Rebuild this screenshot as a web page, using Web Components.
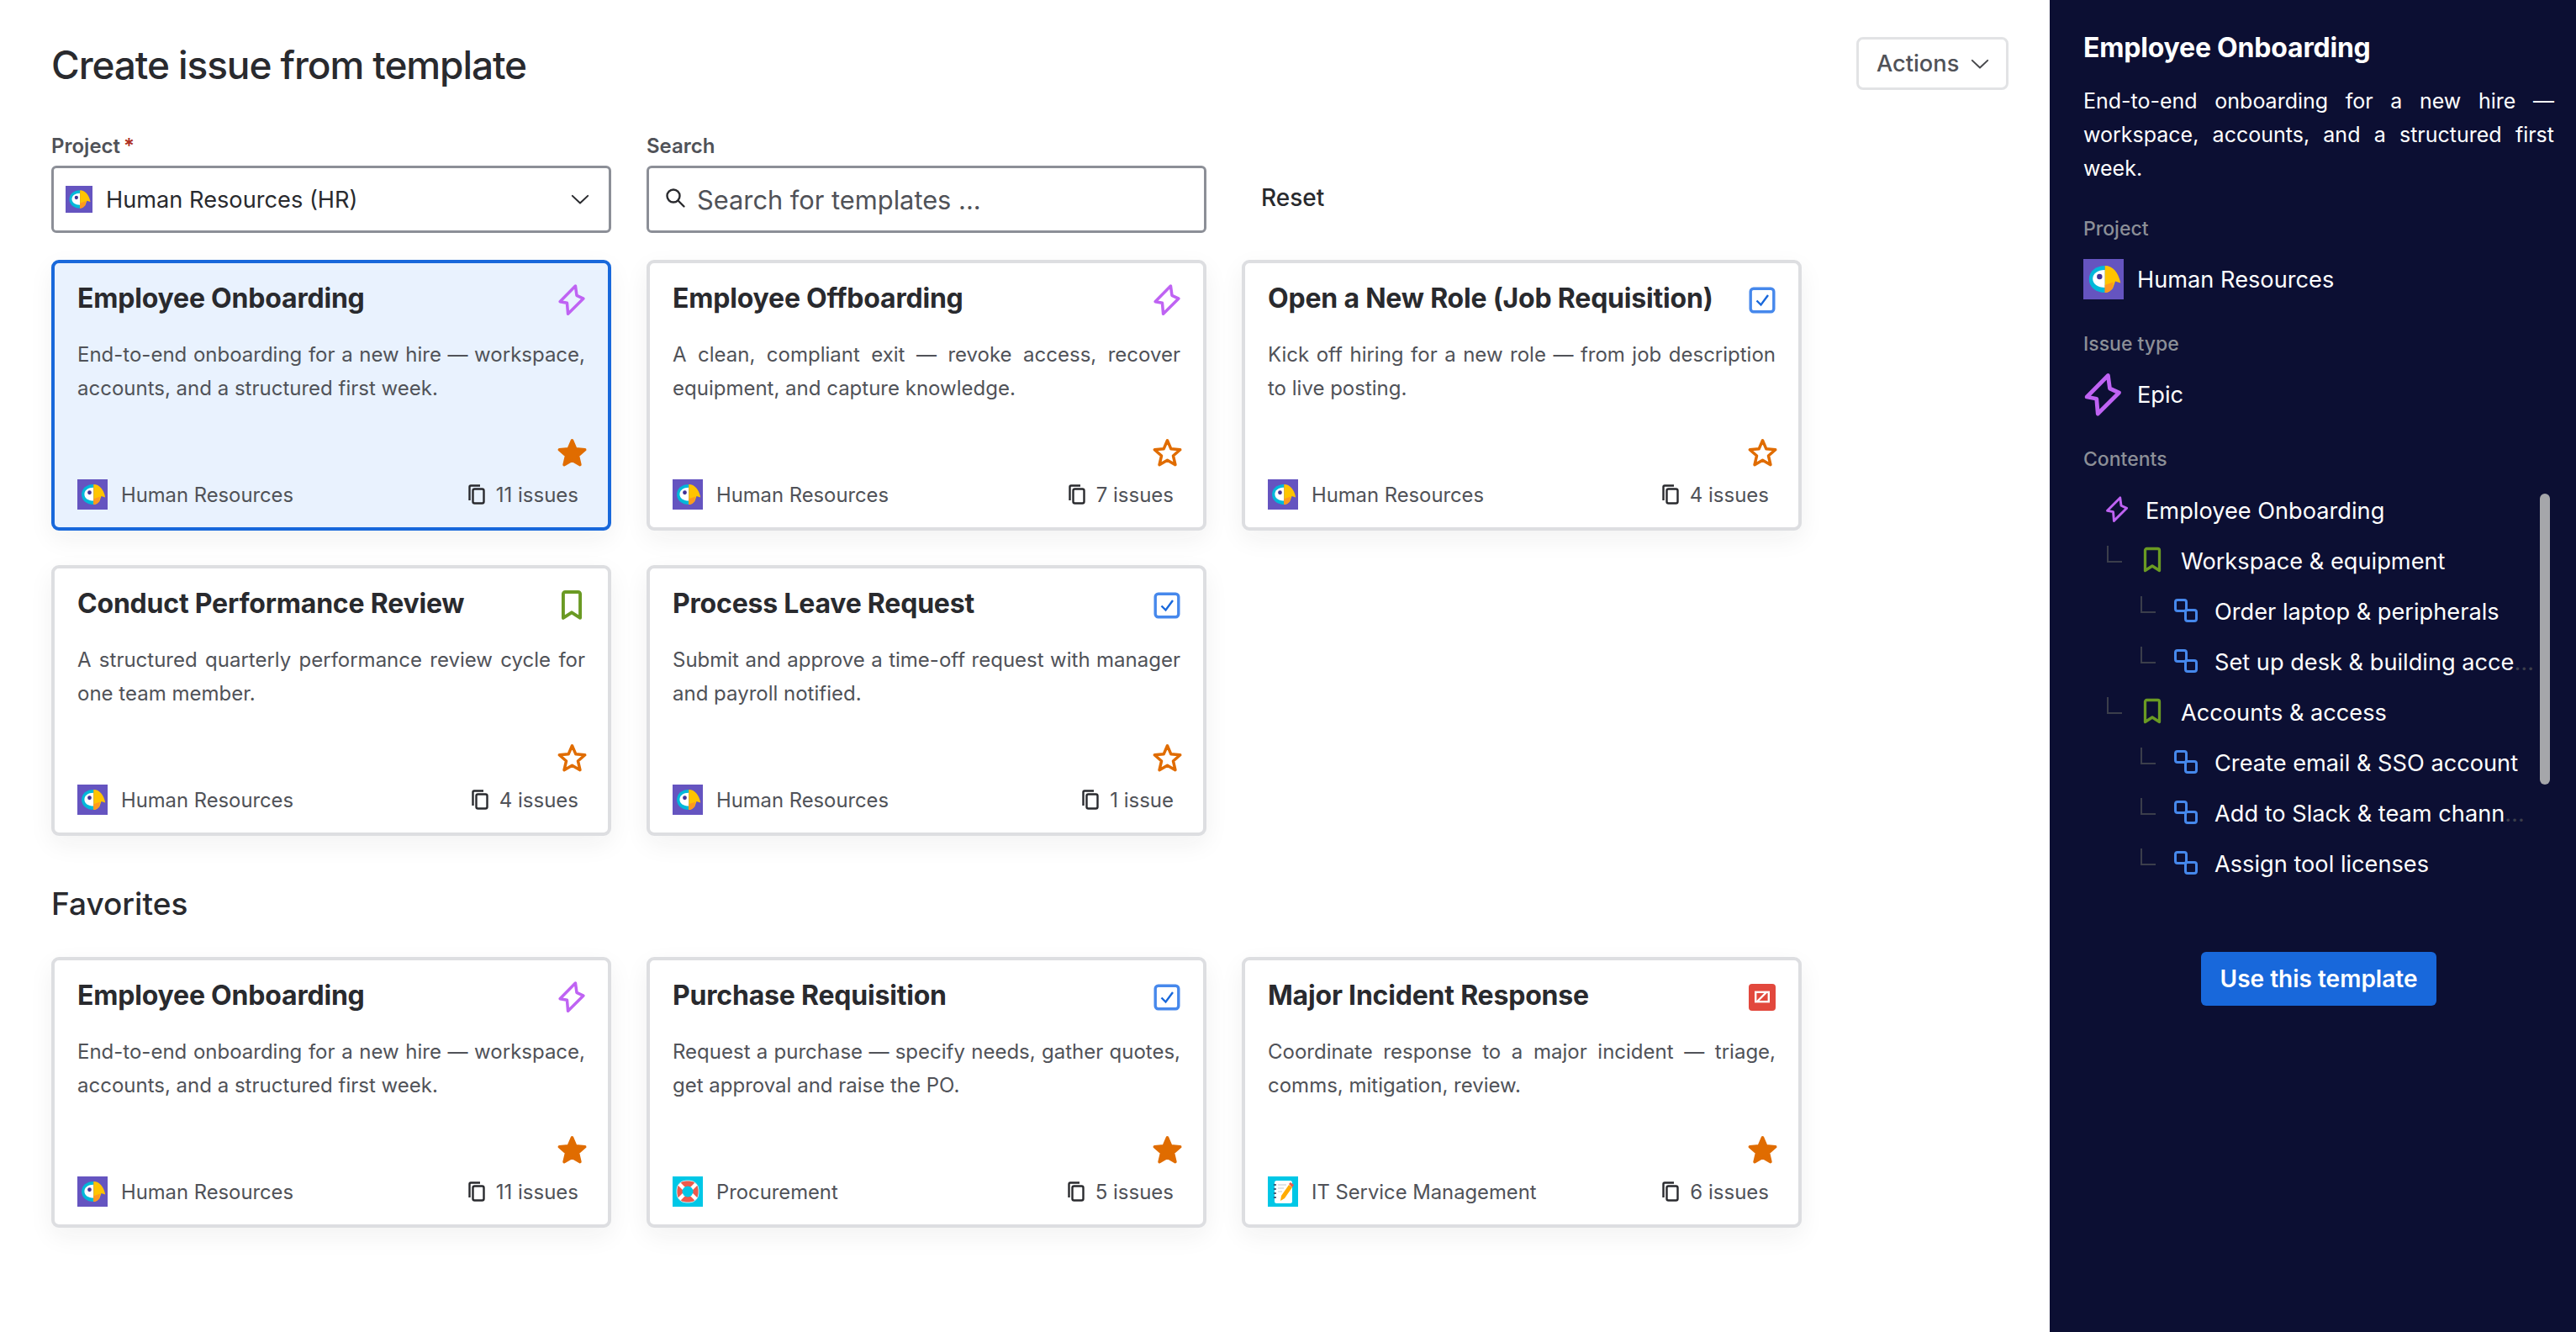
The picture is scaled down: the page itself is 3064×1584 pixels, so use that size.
<!DOCTYPE html>
<html lang="en">
<head>
<meta charset="utf-8">
<title>Create issue from template</title>
<style>
  html, body { margin: 0; padding: 0; background: #fff; }
  body { font-family: Inter, "Liberation Sans", sans-serif; color: #292a2e; }
</style>
</head>
<body>
<template-page></template-page>

<script>
const logos = {
  parrot: `<svg viewBox="0 0 48 48" width="100%" height="100%">
    <rect width="48" height="48" fill="#6554c0"/>
    <path d="M25.7 8C15 8 6.8 14.5 6.8 24S15 40 25.7 40z" fill="#00b8d9"/>
    <path d="M25.7 13C17 13 11.2 17.5 11.2 23.5S17 34 25.7 34z" fill="#fff"/>
    <circle cx="19.3" cy="21" r="3.2" fill="#403294"/>
    <path d="M25.7 8c9.5 0 16 8 18.6 20.5L38 26.5 35 35c-2.5 3-5.5 5-9.3 5z" fill="#ffc400"/>
    <path d="M25.7 40v-9l10-3.5-1 7c-2.3 3.3-5.3 5.5-9 5.5z" fill="#ff991f"/>
  </svg>`,
  buoy: `<svg viewBox="0 0 36 36" width="100%" height="100%">
    <rect width="36" height="36" fill="#00c7e6"/>
    <rect x="5" y="5" width="26" height="26" rx="11" fill="#ef5a4c" stroke="#bdeff7" stroke-width="1"/>
    <path d="M8 9l6 6M28 9l-6 6M8 27l6-6M28 27l-6-6" stroke="#fff" stroke-width="4.5"/>
    <circle cx="18" cy="18" r="6.5" fill="#00c7e6"/>
  </svg>`,
  notes: `<svg viewBox="0 0 36 36" width="100%" height="100%">
    <rect width="36" height="36" fill="#00c7e6"/>
    <rect x="8" y="5" width="21" height="27" rx="2.5" fill="#fff"/>
    <path d="M7 10h3M7 15h3M7 20h3M7 25h3" stroke="#253858" stroke-width="1.5"/>
    <path d="M12 10h10M12 14h7M12 18h5" stroke="#c1c7d0" stroke-width="1.2"/>
    <path d="M25 10l4 3-9 13-5 3 1-6z" fill="#ffab00"/>
    <path d="M25 9l2-2 4 3-2 3z" fill="#ef5a4c"/>
  </svg>`
};

const icons = {
  epic: `<svg viewBox="0 0 32 32" width="100%" height="100%" fill="none" stroke="#bf63f3" stroke-width="3.2" stroke-linejoin="round">
    <path d="M19.6 1L21 11.3l7.3 3.4L11.5 31.3l-1-11.8L2.8 18z"/></svg>`,
  story: `<svg viewBox="0 0 32 32" width="100%" height="100%" fill="none" stroke="#6a9a23" stroke-width="3.3" stroke-linejoin="round">
    <path d="M7.5 4.5a2 2 0 0 1 2-2h13a2 2 0 0 1 2 2v24L16 23l-8.5 5.5z"/></svg>`,
  subtask: `<svg viewBox="0 0 32 32" width="100%" height="100%" fill="none" stroke="#4688ec" stroke-width="3">
    <rect x="3.5" y="3.5" width="13" height="13" rx="2.5"/><rect x="15.5" y="15.5" width="13" height="13" rx="2.5"/></svg>`,
  task: `<svg viewBox="0 0 32 32" width="100%" height="100%" fill="none">
    <rect x="2.2" y="2.2" width="27.6" height="27.6" rx="3.5" stroke="#4688ec" stroke-width="3.4"/>
    <path d="M9.5 16.5l5 5L23 10" stroke="#1868db" stroke-width="2.4"/></svg>`,
  incident: `<svg viewBox="0 0 32 32" width="100%" height="100%">
    <rect width="32" height="32" rx="4" fill="#e2483d"/>
    <rect x="8.2" y="9.8" width="15.6" height="11.4" fill="none" stroke="#fff" stroke-width="2.4"/>
    <path d="M10 21l11-11" stroke="#fff" stroke-width="2.4"/></svg>`,
  star: `<svg viewBox="0 0 34 34" width="100%" height="100%" fill="none" stroke="#e06c00" stroke-width="3.2" stroke-linejoin="round">
    <path d="M17 3.5l4 9.2 10 .9-7.6 6.6 2.3 9.8L17 25l-8.7 5 2.3-9.8L3 13.6l10-.9z"/></svg>`,
  starFull: `<svg viewBox="0 0 34 34" width="100%" height="100%" fill="#e06c00" stroke="#e06c00" stroke-width="3.2" stroke-linejoin="round">
    <path d="M17 3.5l4 9.2 10 .9-7.6 6.6 2.3 9.8L17 25l-8.7 5 2.3-9.8L3 13.6l10-.9z"/></svg>`,
  copy: `<svg viewBox="0 0 24 24" width="100%" height="100%" fill="none" stroke="#292a2e" stroke-width="2.4">
    <path d="M3.5 19V3A1.5 1.5 0 0 1 5 1.5H16"/><rect x="7.5" y="5.5" width="13" height="17" rx="2"/></svg>`,
  chevron: `<svg viewBox="0 0 24 24" width="100%" height="100%" fill="none" stroke="#292a2e" stroke-width="2.2" stroke-linecap="round" stroke-linejoin="round">
    <path d="M2 7.5L12 17l10-9.5"/></svg>`,
  search: `<svg viewBox="0 0 24 24" width="100%" height="100%" fill="none" stroke="#292a2e" stroke-width="2.4" stroke-linecap="round">
    <circle cx="10" cy="10" r="7.5"/><path d="M16 16l6.5 6.5"/></svg>`
};

class ProjectLogo extends HTMLElement {
  constructor() {
    super();
    this.attachShadow({ mode: "open" });
  }
  connectedCallback() {
    const size = this.getAttribute("size") || 36;
    this.shadowRoot.innerHTML = `
      <style>
        :host { display: block; flex: none; width: ${size}px; height: ${size}px; }
        svg { display: block; }
      </style>
      ${logos[this.getAttribute("name")]}
    `;
  }
}
customElements.define("project-logo", ProjectLogo);

class TypeIcon extends HTMLElement {
  constructor() {
    super();
    this.attachShadow({ mode: "open" });
  }
  connectedCallback() {
    const size = this.getAttribute("size") || 32;
    this.shadowRoot.innerHTML = `
      <style>
        :host { display: block; flex: none; width: ${size}px; height: ${size}px; }
        svg { display: block; overflow: visible; }
      </style>
      ${icons[this.getAttribute("name")]}
    `;
  }
}
customElements.define("type-icon", TypeIcon);

class FilterField extends HTMLElement {
  constructor() {
    super();
    this.attachShadow({ mode: "open" });
  }
  connectedCallback() {
    const req = this.hasAttribute("required") ? `<span class="req">*</span>` : "";
    this.shadowRoot.innerHTML = `
      <style>
        :host { display: block; }
        label {
          display: block;
          height: 30px;
          margin-bottom: 8px;
          font-size: 24px;
          line-height: 30px;
          font-weight: 600;
          color: #505258;
        }
        .req { color: #ae2e24; margin-left: 4px; }
        .box {
          box-sizing: border-box;
          height: 80px;
          display: flex;
          align-items: center;
          border: 3px solid #8c8f97;
          border-radius: 6px;
          background: #fff;
          padding: 0 14px;
        }
      </style>
      <label>${this.getAttribute("label")}${req}</label>
      <div class="box"><slot></slot></div>
    `;
  }
}
customElements.define("filter-field", FilterField);

class TemplateCard extends HTMLElement {
  constructor() {
    super();
    this.attachShadow({ mode: "open" });
  }
  connectedCallback() {
    const star = this.hasAttribute("favorite") ? "starFull" : "star";
    const type = this.getAttribute("type");
    const sizes = { story: 38, epic: 35 };
    const typeSize = sizes[type] || 32;
    this.shadowRoot.innerHTML = `
      <style>
        :host {
          display: flex;
          flex-direction: column;
          box-sizing: border-box;
          height: 322px;
          padding: 20px 27px 20px;
          background: #fff;
          border: 4px solid #dddee1;
          border-radius: 9px;
          box-shadow: 0 10px 30px rgba(30, 31, 33, 0.06);
        }
        :host([selected]) {
          background: #e9f2fe;
          border-color: #1868db;
        }
        .head { display: flex; justify-content: space-between; height: 40px; }
        h3 {
          margin: 2px 0 0;
          font-size: 32px;
          line-height: 40px;
          font-weight: 700;
          color: #292a2e;
          letter-spacing: -0.2px;
        }
        .head type-icon { margin-top: 7.5px; }
        .head type-icon.story { margin: 5px -3px 0 0; }
        .head type-icon.epic { margin: 6px -1.5px 0 0; }
        .desc {
          margin-top: 29px;
          height: 80px;
          font-size: 24px;
          line-height: 40px;
          color: #505258;
          text-align: justify;
        }
        .star { display: flex; justify-content: flex-end; margin: 38px -3px 0 0; height: 34px; }
        .foot {
          display: flex;
          align-items: center;
          margin-top: 16px;
          height: 36px;
          font-size: 24px;
          color: #505258;
        }
        .name { margin-left: 16px; flex: 1; font-size: 23.8px; }
        .count { display: flex; align-items: center; gap: 11px; margin-right: 8px; }
      </style>
      <div class="head">
        <h3>${this.getAttribute("heading")}</h3>
        <type-icon class="${type}" name="${type}" size="${typeSize}"></type-icon>
      </div>
      <div class="desc"><slot></slot></div>
      <div class="star"><type-icon name="${star}" size="37"></type-icon></div>
      <div class="foot">
        <project-logo name="${this.getAttribute("logo")}" size="36"></project-logo>
        <span class="name">${this.getAttribute("project")}</span>
        <span class="count"><type-icon name="copy" size="24"></type-icon>${this.getAttribute("count")}</span>
      </div>
    `;
  }
}
customElements.define("template-card", TemplateCard);

class TreeRow extends HTMLElement {
  constructor() {
    super();
    this.attachShadow({ mode: "open" });
  }
  connectedCallback() {
    const level = Number(this.getAttribute("level") || 0);
    const pad = level === 0 ? 24 : 28 + 40 * (level - 1);
    const elbow = level === 0 ? "" : `<i class="elbow"></i>`;
    const type = this.getAttribute("type");
    this.shadowRoot.innerHTML = `
      <style>
        :host {
          display: flex;
          align-items: center;
          height: 60px;
          padding-left: ${pad}px;
        }
        .elbow {
          flex: none;
          align-self: flex-start;
          box-sizing: border-box;
          width: 18px;
          height: 20px;
          margin: 12px 20px 0 0;
          border-left: 2px solid #3b3e4b;
          border-bottom: 2px solid #3b3e4b;
        }
        type-icon { margin-top: -3px; }
        type-icon.epic { margin: -3px 1.5px 0; }
        .text {
          flex: 1;
          min-width: 0;
          margin-left: 18px;
          font-size: 27.2px;
          white-space: nowrap;
          overflow: hidden;
          text-overflow: ellipsis;
          color: #3b3e4b;
        }
        .text span { color: #fff; }
      </style>
      ${elbow}
      <type-icon class="${type}" name="${type}" size="${type === "epic" ? 29 : 32}"></type-icon>
      <div class="text"><span><slot></slot></span></div>
    `;
  }
}
customElements.define("tree-row", TreeRow);

class DetailPanel extends HTMLElement {
  constructor() {
    super();
    this.attachShadow({ mode: "open" });
  }
  connectedCallback() {
    this.shadowRoot.innerHTML = `
      <style>
        :host {
          display: block;
          flex: none;
          box-sizing: border-box;
          width: 626px;
          min-height: 1584px;
          padding: 37px 26px 0 40px;
          background: #0c0f33;
          color: #fff;
        }
        h2 { margin: 0; font-size: 32px; line-height: 40px; font-weight: 700; letter-spacing: -0.2px; }
        p { margin: 23px 0 0; font-size: 25px; line-height: 40px; text-align: justify; }
        .label {
          margin-top: 37px;
          height: 32px;
          font-size: 23px;
          line-height: 32px;
          font-weight: 500;
          color: #8c8f97;
        }
        .label.first { margin-top: 36px; }
        .value {
          display: flex;
          align-items: center;
          gap: 16px;
          height: 48px;
          margin-top: 20px;
          font-size: 27.2px;
        }
        .tree { position: relative; width: 536px; margin-top: 15px; }
        .thumb {
          position: absolute;
          left: 543px;
          top: 10px;
          width: 12px;
          height: 346px;
          border-radius: 6px;
          background: #a5a6aa;
        }
        .actions { display: flex; justify-content: center; margin-top: 75px; }
        button {
          width: 280px;
          height: 64px;
          border: 0;
          border-radius: 6px;
          background: #1868db;
          color: #fff;
          font: 600 28px Inter, "Liberation Sans", sans-serif;
        }
      </style>
      <h2>Employee Onboarding</h2>
      <p>End-to-end onboarding for a new hire — workspace, accounts, and a structured first week.</p>
      <div class="label first">Project</div>
      <div class="value"><project-logo name="parrot" size="48"></project-logo>Human Resources</div>
      <div class="label">Issue type</div>
      <div class="value"><type-icon name="epic" size="48"></type-icon>Epic</div>
      <div class="label">Contents</div>
      <div class="tree">
        <tree-row level="0" type="epic">Employee Onboarding</tree-row>
        <tree-row level="1" type="story">Workspace &amp; equipment</tree-row>
        <tree-row level="2" type="subtask">Order laptop &amp; peripherals</tree-row>
        <tree-row level="2" type="subtask">Set up desk &amp; building access</tree-row>
        <tree-row level="1" type="story">Accounts &amp; access</tree-row>
        <tree-row level="2" type="subtask">Create email &amp; SSO account</tree-row>
        <tree-row level="2" type="subtask">Add to Slack &amp; team channels</tree-row>
        <tree-row level="2" type="subtask">Assign tool licenses</tree-row>
        <div class="thumb"></div>
      </div>
      <div class="actions"><button>Use this template</button></div>
    `;
  }
}
customElements.define("detail-panel", DetailPanel);

class TemplatePage extends HTMLElement {
  constructor() {
    super();
    this.attachShadow({ mode: "open" });
  }
  connectedCallback() {
    this.shadowRoot.innerHTML = `
      <style>
        :host { display: flex; min-height: 1584px; }
        main { flex: 1; box-sizing: border-box; padding: 44px 49px 0 61px; }
        header { display: flex; justify-content: space-between; align-items: center; height: 63px; }
        h1 { margin: 3px 0 0; font-size: 46px; line-height: 60px; font-weight: 530; letter-spacing: -1.1px; color: #292a2e; }
        .actions {
          display: flex;
          align-items: center;
          gap: 14px;
          box-sizing: border-box;
          width: 181px;
          height: 63px;
          padding: 0 0 0 21px;
          border: 3px solid #e2e3e5;
          border-radius: 8px;
          background: #fff;
          color: #505258;
          font: 500 27.2px Inter, "Liberation Sans", sans-serif;
        }
        .actions type-icon { opacity: 0.85; }
        .filters {
          display: grid;
          grid-template-columns: repeat(3, 666px);
          gap: 42px;
          align-items: end;
          margin-top: 52px;
        }
        .sel { flex: 1; margin-left: 16px; font-size: 27.2px; color: #292a2e; }
        .ph { margin-left: 14px; font-size: 30.8px; color: #505258; }
        .reset {
          justify-self: start;
          height: 76px;
          margin-bottom: 4px;
          padding: 0 23px;
          border: 0;
          background: none;
          color: #292a2e;
          font: 500 28px Inter, "Liberation Sans", sans-serif;
        }
        .grid {
          display: grid;
          grid-template-columns: repeat(3, 666px);
          column-gap: 42px;
          row-gap: 41px;
        }
        .first { margin-top: 32px; }
        h2 { margin: 56px 0 38px; font-size: 37px; line-height: 50px; font-weight: 500; color: #292a2e; }
      </style>
      <main>
        <header>
          <h1>Create issue from template</h1>
          <button class="actions">Actions<type-icon name="chevron" size="22"></type-icon></button>
        </header>
        <div class="filters">
          <filter-field label="Project" required>
            <project-logo name="parrot" size="32"></project-logo>
            <span class="sel">Human Resources (HR)</span>
            <type-icon name="chevron" size="22" style="margin-right:9px"></type-icon>
          </filter-field>
          <filter-field label="Search">
            <type-icon name="search" size="24" style="margin-left:5px;margin-top:-4px"></type-icon>
            <span class="ph">Search for templates ...</span>
          </filter-field>
          <button class="reset">Reset</button>
        </div>
        <div class="grid first">
          <template-card selected heading="Employee Onboarding" type="epic" favorite logo="parrot" project="Human Resources" count="11 issues">End-to-end onboarding for a new hire — workspace, accounts, and a structured first week.</template-card>
          <template-card heading="Employee Offboarding" type="epic" logo="parrot" project="Human Resources" count="7 issues">A clean, compliant exit — revoke access, recover equipment, and capture knowledge.</template-card>
          <template-card heading="Open a New Role (Job Requisition)" type="task" logo="parrot" project="Human Resources" count="4 issues">Kick off hiring for a new role — from job description to live posting.</template-card>
          <template-card heading="Conduct Performance Review" type="story" logo="parrot" project="Human Resources" count="4 issues">A structured quarterly performance review cycle for one team member.</template-card>
          <template-card heading="Process Leave Request" type="task" logo="parrot" project="Human Resources" count="1 issue">Submit and approve a time-off request with manager and payroll notified.</template-card>
        </div>
        <h2>Favorites</h2>
        <div class="grid">
          <template-card heading="Employee Onboarding" type="epic" favorite logo="parrot" project="Human Resources" count="11 issues">End-to-end onboarding for a new hire — workspace, accounts, and a structured first week.</template-card>
          <template-card heading="Purchase Requisition" type="task" favorite logo="buoy" project="Procurement" count="5 issues">Request a purchase — specify needs, gather quotes, get approval and raise the PO.</template-card>
          <template-card heading="Major Incident Response" type="incident" favorite logo="notes" project="IT Service Management" count="6 issues">Coordinate response to a major incident — triage, comms, mitigation, review.</template-card>
        </div>
      </main>
      <detail-panel></detail-panel>
    `;
  }
}
customElements.define("template-page", TemplatePage);
</script>
</body>
</html>
